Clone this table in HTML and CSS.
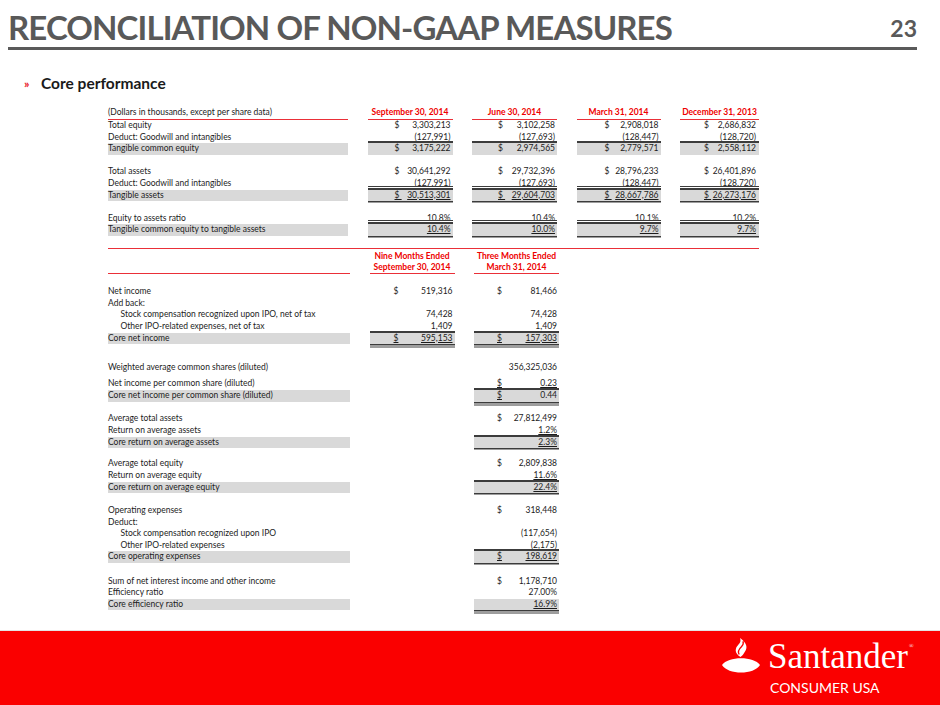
FILE: index.html
```html
<!DOCTYPE html>
<html lang="en">
<head>
<meta charset="utf-8">
<title>Reconciliation of Non-GAAP Measures</title>
<link rel="stylesheet" href="styles.css">
</head>
<body>
<div class="slide">
  <header class="top">
    <h1 class="title">RECONCILIATION OF NON-GAAP MEASURES</h1>
    <span class="pagenum">23</span>
  </header>

  <div class="subhead"><span class="bullet">»</span><span class="subtitle">Core performance</span></div>

  <main class="tables">
    <section class="t1">
      <div class="row hdr">
        <div class="c lab">(Dollars in thousands, except per share data)</div>
        <div class="c h">September 30, 2014</div>
        <div class="c h">June 30, 2014</div>
        <div class="c h">March 31, 2014</div>
        <div class="c h">December 31, 2013</div>
      </div>
      <div class="row">
        <div class="c lab">Total equity</div>
        <div class="c v"><span class="d">$</span><span>3,303,213</span></div>
        <div class="c v"><span class="d">$</span><span>3,102,258</span></div>
        <div class="c v"><span class="d">$</span><span>2,908,018</span></div>
        <div class="c v"><span class="d">$</span><span>2,686,832</span></div>
      </div>
      <div class="row">
        <div class="c lab">Deduct: Goodwill and intangibles</div>
        <div class="c v"><span class="u">(127,991)</span></div>
        <div class="c v"><span class="u">(127,693)</span></div>
        <div class="c v"><span class="u">(128,447)</span></div>
        <div class="c v"><span class="u">(128,720)</span></div>
      </div>
      <div class="row tot bt">
        <div class="c lab">Tangible common equity</div>
        <div class="c v"><span class="d">$</span><span>3,175,222</span></div>
        <div class="c v"><span class="d">$</span><span>2,974,565</span></div>
        <div class="c v"><span class="d">$</span><span>2,779,571</span></div>
        <div class="c v"><span class="d">$</span><span>2,558,112</span></div>
      </div>
      <div class="row"></div>
      <div class="row">
        <div class="c lab">Total assets</div>
        <div class="c v"><span class="d">$</span><span>30,641,292</span></div>
        <div class="c v"><span class="d">$</span><span>29,732,396</span></div>
        <div class="c v"><span class="d">$</span><span>28,796,233</span></div>
        <div class="c v"><span class="d">$</span><span>26,401,896</span></div>
      </div>
      <div class="row">
        <div class="c lab">Deduct: Goodwill and intangibles</div>
        <div class="c v"><span class="u">(127,991)</span></div>
        <div class="c v"><span class="u">(127,693)</span></div>
        <div class="c v"><span class="u">(128,447)</span></div>
        <div class="c v"><span class="u">(128,720)</span></div>
      </div>
      <div class="row tot btd bb">
        <div class="c lab">Tangible assets</div>
        <div class="c v"><span class="d u">$&nbsp;</span><span class="u">30,513,301</span></div>
        <div class="c v"><span class="d u">$&nbsp;</span><span class="u">29,604,703</span></div>
        <div class="c v"><span class="d u">$&nbsp;</span><span class="u">28,667,786</span></div>
        <div class="c v"><span class="d u">$&nbsp;</span><span class="u">26,273,176</span></div>
      </div>
      <div class="row"></div>
      <div class="row">
        <div class="c lab">Equity to assets ratio</div>
        <div class="c v"><span>10.8%</span></div>
        <div class="c v"><span>10.4%</span></div>
        <div class="c v"><span>10.1%</span></div>
        <div class="c v"><span>10.2%</span></div>
      </div>
      <div class="row tot btd bb">
        <div class="c lab">Tangible common equity to tangible assets</div>
        <div class="c v"><span class="u">10.4%</span></div>
        <div class="c v"><span class="u">10.0%</span></div>
        <div class="c v"><span class="u">9.7%</span></div>
        <div class="c v"><span class="u">9.7%</span></div>
      </div>
    </section>

    <div class="redrule"></div>

    <section class="t2">
      <div class="row hdr2">
        <div class="c lab"></div>
        <div class="c h">Nine Months Ended<br>September 30, 2014</div>
        <div class="c h">Three Months Ended<br>March 31, 2014</div>
      </div>
      <div class="sp sp-12"></div>
      <div class="row">
        <div class="c lab">Net income</div>
        <div class="c v"><span class="d">$</span><span>519,316</span></div>
        <div class="c v"><span class="d">$</span><span>81,466</span></div>
      </div>
      <div class="row">
        <div class="c lab">Add back:</div>
        <div class="c e"></div>
        <div class="c e"></div>
      </div>
      <div class="row">
        <div class="c lab ind">Stock compensation recognized upon IPO, net of tax</div>
        <div class="c v"><span>74,428</span></div>
        <div class="c v"><span>74,428</span></div>
      </div>
      <div class="row">
        <div class="c lab ind">Other IPO-related expenses, net of tax</div>
        <div class="c v"><span>1,409</span></div>
        <div class="c v"><span>1,409</span></div>
      </div>
      <div class="row tot bt bbd">
        <div class="c lab">Core net income</div>
        <div class="c v"><span class="d u">$</span><span class="u">595,153</span></div>
        <div class="c v"><span class="d u">$</span><span class="u">157,303</span></div>
      </div>
      <div class="sp sp-18"></div>
      <div class="row">
        <div class="c lab">Weighted average common shares (diluted)</div>
        <div class="c e"></div>
        <div class="c v"><span>356,325,036</span></div>
      </div>
      <div class="sp sp-5"></div>
      <div class="row">
        <div class="c lab">Net income per common share (diluted)</div>
        <div class="c e"></div>
        <div class="c v"><span class="d u">$</span><span class="u">0.23</span></div>
      </div>
      <div class="row tot bt bbd">
        <div class="c lab">Core net income per common share (diluted)</div>
        <div class="c e"></div>
        <div class="c v"><span class="d u">$</span><span>0.44</span></div>
      </div>
      <div class="sp sp-12"></div>
      <div class="row">
        <div class="c lab">Average total assets</div>
        <div class="c e"></div>
        <div class="c v"><span class="d">$</span><span>27,812,499</span></div>
      </div>
      <div class="row">
        <div class="c lab">Return on average assets</div>
        <div class="c e"></div>
        <div class="c v"><span class="u">1.2%</span></div>
      </div>
      <div class="row tot bt bb">
        <div class="c lab">Core return on average assets</div>
        <div class="c e"></div>
        <div class="c v"><span class="u">2.3%</span></div>
      </div>
      <div class="sp sp-10"></div>
      <div class="row">
        <div class="c lab">Average total equity</div>
        <div class="c e"></div>
        <div class="c v"><span class="d">$</span><span>2,809,838</span></div>
      </div>
      <div class="row">
        <div class="c lab">Return on average equity</div>
        <div class="c e"></div>
        <div class="c v"><span class="u">11.6%</span></div>
      </div>
      <div class="row tot bt bb">
        <div class="c lab">Core return on average equity</div>
        <div class="c e"></div>
        <div class="c v"><span class="u">22.4%</span></div>
      </div>
      <div class="sp sp-12"></div>
      <div class="row">
        <div class="c lab">Operating expenses</div>
        <div class="c e"></div>
        <div class="c v"><span class="d">$</span><span>318,448</span></div>
      </div>
      <div class="row">
        <div class="c lab">Deduct:</div>
        <div class="c e"></div>
        <div class="c e"></div>
      </div>
      <div class="row">
        <div class="c lab ind">Stock compensation recognized upon IPO</div>
        <div class="c e"></div>
        <div class="c v"><span>(117,654)</span></div>
      </div>
      <div class="row">
        <div class="c lab ind">Other IPO-related expenses</div>
        <div class="c e"></div>
        <div class="c v"><span class="u">(2,175)</span></div>
      </div>
      <div class="row tot bt bb">
        <div class="c lab">Core operating expenses</div>
        <div class="c e"></div>
        <div class="c v"><span class="d u">$</span><span class="u">198,619</span></div>
      </div>
      <div class="sp sp-13"></div>
      <div class="row">
        <div class="c lab">Sum of net interest income and other income</div>
        <div class="c e"></div>
        <div class="c v"><span class="d">$</span><span>1,178,710</span></div>
      </div>
      <div class="row">
        <div class="c lab">Efficiency ratio</div>
        <div class="c e"></div>
        <div class="c v"><span>27.00%</span></div>
      </div>
      <div class="row tot bbd">
        <div class="c lab">Core efficiency ratio</div>
        <div class="c e"></div>
        <div class="c v"><span class="u">16.9%</span></div>
      </div>
    </section>
  </main>

  <footer class="footer">
    <div class="logo">
      <div class="brand">
        <svg class="flame" viewBox="0 0 38 35" width="38" height="35" aria-hidden="true">
          <path d="M0 27 C6 18 32 18 38 27 C32 37 6 37 0 27 Z" fill="#fff"/>
          <path d="M18.5 19 C12 15 13 10 16.5 6.5 C18.5 4.5 19 2.5 18 0 C24.5 4.5 26 9.5 23 13.5 C21.5 15.5 21.5 17 18.5 19 Z" fill="#fff"/>
          <path d="M17.2 16.5 C15.2 13.5 17 11 19.6 8.5 C21.3 6.8 21.6 5 21 3.2" fill="none" stroke="#fa0000" stroke-width="1.3"/>
        </svg>
        <span class="wordmark">Santander<span class="reg">®</span></span>
      </div>
      <div class="consumer">CONSUMER USA</div>
    </div>
  </footer>
</div>
</body>
</html>
```

FILE: styles.css
```css
* { box-sizing: border-box; margin: 0; padding: 0; }
html, body { width: 940px; height: 705px; overflow: hidden; background: #fff; }
body { font-family: Lato, "Liberation Sans", sans-serif; color: #1c1c1c; }

.slide { display: flex; flex-direction: column; height: 705px; }

/* header */
.top {
  display: flex; justify-content: space-between; align-items: flex-end;
  margin: 0 23px 0 8px; padding-top: 7px;
  border-bottom: 3px solid #5a5a5a;
}
.title { font-size: 33px; line-height: 40px; font-weight: 700; color: #595959; letter-spacing: -0.9px; }
.pagenum { font-size: 23px; line-height: 22px; font-weight: 700; color: #595959; margin-bottom: 8px; }

.subhead { display: flex; align-items: center; height: 20px; margin: 23px 0 0 24px; }
.bullet { width: 17px; color: #e8141e; font-size: 12px; font-weight: 700; }
.subtitle { font-size: 15.5px; font-weight: 700; color: #1a1a1a; }

/* tables */
.tables { flex: 1; padding-left: 108px; }
.t1 { margin-top: 14px; width: 651px; }
.t1 .row { grid-template-columns: 240px 85px 85px 84px 79px; }
.t2 .row { grid-template-columns: 242px 85px 85px; }

.row {
  display: grid; column-gap: 19.5px;
  height: 11.6px; font-size: 8.5px; line-height: 11.6px;
}
.c { height: 100%; display: flex; align-items: center; white-space: nowrap; }
.ind { padding-left: 12.5px; }
.v { justify-content: flex-end; padding-right: 2px; }
.d { margin-right: auto; }
.u { text-decoration: underline; text-decoration-thickness: 1px; text-underline-offset: 0.5px; }

.t1 .v:nth-child(2) { padding-left: 27px; }
.t1 .v:nth-child(3) { padding-left: 26px; }
.t1 .v:nth-child(4) { padding-left: 28px; }
.t1 .v:nth-child(5) { padding-left: 24px; padding-right: 3px; }
.t2 .v:nth-child(2) { padding-left: 24px; }
.t2 .v:nth-child(3) { padding-left: 23px; }

.hdr { height: 13px; }
.hdr .c { border-bottom: 1.4px solid #ea2f38; }
.h { justify-content: center; color: #ee0000; font-weight: 700; }

.hdr2 { height: 25px; }
.hdr2 .c { border-bottom: 1.4px solid #ea2f38; align-items: flex-end; }
.hdr2 .h { text-align: center; line-height: 11px; }

.redrule { margin-top: 12px; width: 651px; height: 1.5px; background: #ea2f38; }

/* totals: rules drawn just outside the shaded band */
.tot .lab, .tot .v { background: #d9d9d9; }
.tot .v { box-shadow: var(--rule-top, 0 0 0 transparent), var(--rule-bottom, 0 0 0 transparent); }
.bt { --rule-top: 0 -2px 0 #3c3c3c; }
.btd { --rule-top: 0 -2px 0 #3c3c3c, 0 -3px 0 #fff, 0 -4px 0 #3c3c3c; }
.bb { --rule-bottom: 0 1.5px 0 #3c3c3c; }
.bbd { --rule-bottom: 0 1.5px 0 #3c3c3c, 0 2.5px 0 #fff, 0 3.5px 0 #3c3c3c; }

/* spacers */
.sp-5 { height: 5.1px; }
.sp-10 { height: 10.2px; }
.sp-12 { height: 11.8px; }
.sp-13 { height: 12.6px; }
.sp-18 { height: 17.6px; }

/* footer */
.footer {
  height: 75px; background: #fa0000; border-top: 1px solid #e4e4e4;
  padding: 8px 0 0 722px; color: #fff;
}
.logo { display: flex; flex-direction: column; }
.brand { display: flex; align-items: flex-start; height: 36px; }
.flame { margin-top: -1px; margin-right: 8px; flex: none; }
.wordmark { font-family: "Liberation Serif", serif; font-size: 35px; line-height: 36px; }
.reg { font-size: 6px; vertical-align: top; line-height: 14px; margin-left: 1px; }
.consumer { margin: 5px 0 0 48px; font-size: 14px; line-height: 16px; }
```
